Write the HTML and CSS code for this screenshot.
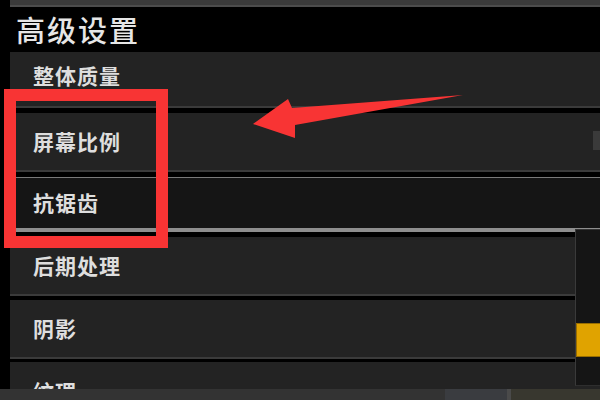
FILE: index.html
```html
<!DOCTYPE html>
<html>
<head>
  <meta charset="utf-8">
  <title>高级设置</title>
  <link rel="stylesheet" href="styles.css">
</head>
<body>

<div class="screen">
    <div class="top-strip"></div>
    <div class="title">高级设置</div>

    <div class="row row-quality">整体质量</div>
    <div class="row row-ratio"><span>屏幕比例</span><div class="thumb"></div></div>
    <div class="row row-active">抗锯齿</div>
    <div class="row row-post">后期处理</div>
    <div class="row row-shadow">阴影</div>
    <div class="row row-last">纹理</div>

    <!-- scrollbar on the right -->
    <div class="scrollbar"><div class="scroll-knob"></div></div>

    <!-- annotation -->
    <div class="mark-box"></div>
    <svg class="mark-arrow" width="600" height="400" viewBox="0 0 600 400">
        <polygon points="253,124 288,99 292,108 463,95 295,125 295,138" fill="#f83434"/>
    </svg>
</div>

<div class="bottom-bar">
    <div class="bar-left"></div>
    <div class="bar-mid"></div>
    <div class="bar-sep"></div>
    <div class="bar-right"></div>
</div>

</body>
</html>
```

FILE: styles.css
```css
html, body {
    margin: 0;
    padding: 0;
}

body {
    width: 600px;
    height: 400px;
    background: #000;
    display: flex;
    flex-direction: column;
    overflow: hidden;
    font-family: "Noto Sans CJK SC", "Noto Sans", sans-serif;
}

.screen {
    position: relative;
    height: 389px;
    overflow: hidden;
}

.top-strip {
    margin-left: 10px;
    height: 5px;
    background: #3a3a3a;
    border-bottom: 2px solid #4c4c4c;
}

.title {
    height: 45px;
    padding-left: 16px;
    line-height: 44px;
    font-size: 29px;
    letter-spacing: 2px;
    font-weight: 500;
    color: #e6e6e6;
}

.row {
    margin-left: 10px;
    margin-bottom: 5px;
    height: 59px;
    padding-left: 23px;
    padding-bottom: 2px;
    box-sizing: border-box;
    display: flex;
    align-items: center;
    background: #232323;
    border-bottom: 2px solid #3b3b3b;
    font-size: 21px;
    letter-spacing: 1px;
    font-weight: bold;
    color: #dedede;
}

.row-quality {
    height: 56px;
    padding-bottom: 8px;
}

.row-ratio {
    justify-content: space-between;
}

.thumb {
    width: 7px;
    height: 19px;
    background: #3a3a3a;
}

.row-active {
    height: 55px;
    background: #151515;
    border-top: 1px solid #7a7a7a;
    border-bottom: 4px solid #8e8e8e;
}

.row-post {
    margin-bottom: 4px;
}

.row-shadow {
    margin-bottom: 3px;
}

.row-last {
    height: 40px;
    align-items: flex-start;
    padding-top: 14px;
}

.scrollbar {
    position: absolute;
    left: 575px;
    top: 229px;
    width: 25px;
    height: 157px;
    box-sizing: border-box;
    background: #151515;
    border-left: 1px solid #3a3a3a;
    border-top: 1px solid #333;
    border-bottom: 1px solid #2e2e2e;
}

.scroll-knob {
    margin-top: 93px;
    height: 32px;
    background: #e0a300;
    border: 1px solid #9a6e00;
    border-right: none;
}

.mark-box {
    position: absolute;
    left: 4px;
    top: 89px;
    width: 164px;
    height: 159px;
    box-sizing: border-box;
    border: 12px solid #f83434;
}

.mark-arrow {
    position: absolute;
    left: 0;
    top: 0;
}

.bottom-bar {
    height: 11px;
    display: flex;
    background: #333;
}

.bar-left {
    width: 445px;
    background: #333;
}

.bar-mid {
    width: 62px;
    background: #3a3c40;
}

.bar-sep {
    width: 4px;
    background: #4a4a4a;
}

.bar-right {
    flex: 1;
    background: #38372f;
}
```
